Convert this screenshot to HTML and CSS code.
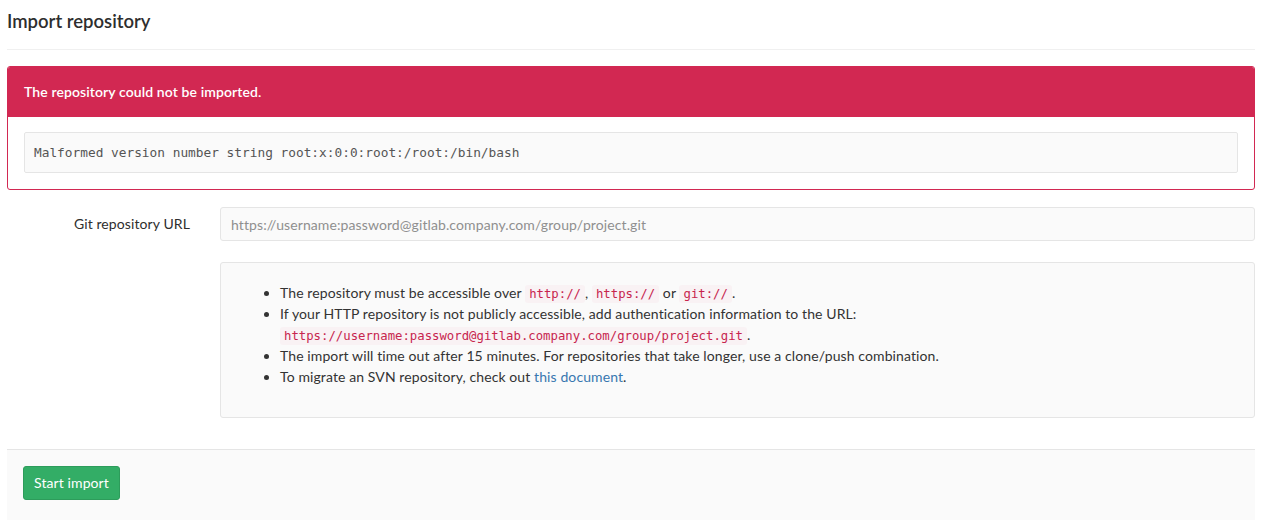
FILE: index.html
```html
<!DOCTYPE html>
<html>
<head>
<meta charset="utf-8">
<link rel="stylesheet" href="styles.css">
</head>
<body>
<div class="page">
  <h3 class="page-title">Import repository</h3>
  <hr class="divider">
  <div class="alert">
    <div class="alert-header">The repository could not be imported.</div>
    <div class="alert-body">
      <pre class="error-pre">Malformed version number string root:x:0:0:root:/root:/bin/bash</pre>
    </div>
  </div>
  <div class="form-group">
    <label class="form-label">Git repository URL</label>
    <input class="form-input" type="text" placeholder="https://username:password@gitlab.company.com/group/project.git">
  </div>
  <div class="form-group">
    <div class="form-label"></div>
    <div class="info-box">
      <ul class="info-list">
        <li>The repository must be accessible over <code>http://</code>, <code>https://</code> or <code>git://</code>.</li>
        <li>If your HTTP repository is not publicly accessible, add authentication information to the URL: <code>https://username:password@gitlab.company.com/group/project.git</code>.</li>
        <li>The import will time out after 15 minutes. For repositories that take longer, use a clone/push combination.</li>
        <li>To migrate an SVN repository, check out <a href="#">this document</a>.</li>
      </ul>
    </div>
  </div>
  <div class="form-actions">
    <button class="btn-success" type="button">Start import</button>
  </div>
</div>
</body>
</html>
```

FILE: styles.css
```css
html, body {
  margin: 0;
  padding: 0;
  background: #fff;
}
body {
  font-family: "Lato", "Liberation Sans", sans-serif;
  font-size: 14px;
  letter-spacing: 0.1px;
  color: #2e2e2e;
  line-height: 21px;
}
.page {
  width: 1248px;
  margin-left: 7px;
}
.page-title {
  margin: 0;
  padding-top: 10px;
  font-size: 18.5px;
  line-height: 22px;
  font-weight: 600;
  letter-spacing: 0;
  color: #2e2e2e;
}
.divider {
  margin: 17px 0 16px 0;
  border: 0;
  border-top: 1px solid #f0f0f0;
  height: 0;
}
.alert {
  border: 1px solid #d22852;
  border-radius: 3px;
  overflow: hidden;
}
.alert-header {
  background: #d22852;
  color: #fff;
  font-weight: 600;
  height: 50px;
  line-height: 49px;
  padding: 0 16px;
}
.alert-body {
  padding: 15px 16px 16px 16px;
}
.error-pre {
  margin: 0;
  background: #fafafa;
  border: 1px solid #e5e5e5;
  border-radius: 2px;
  padding: 10px 9px;
  font-family: "DejaVu Sans Mono", "Liberation Mono", monospace;
  font-size: 12.8px;
  line-height: 19px;
  letter-spacing: 0;
  color: #555;
}
.form-group {
  display: flex;
  margin-top: 17px;
}
.form-group + .form-group {
  margin-top: 21px;
}
.form-label {
  width: 183px;
  flex: none;
  margin-right: 30px;
  text-align: right;
  line-height: 34px;
  color: #2e2e2e;
}
.form-input {
  flex: 1;
  box-sizing: border-box;
  height: 34px;
  margin: 0;
  padding: 6px 10px;
  background: #fafafa;
  border: 1px solid #e5e5e5;
  border-radius: 3px;
  font-family: inherit;
  font-size: 14px;
  letter-spacing: 0.1px;
  color: #555;
}
.form-input::placeholder {
  color: #8f8f8f;
}
.info-box {
  flex: 1;
  background: #fafafa;
  border: 1px solid #e5e5e5;
  border-radius: 3px;
  padding: 19px;
  color: #333;
}
.info-list {
  margin: 0 0 11px 0;
  padding-left: 40px;
}
.info-list li {
  line-height: 21px;
}
.info-list code {
  font-family: "DejaVu Sans Mono", "Liberation Mono", monospace;
  font-size: 12.3px;
  line-height: 1;
  letter-spacing: 0;
  color: #c7254e;
  background: #f9f2f4;
  padding: 2px 4px;
  border-radius: 3px;
}
.info-list a {
  color: #3777b0;
  text-decoration: none;
}
.form-actions {
  margin-top: 31px;
  border-top: 1px solid #e5e5e5;
  background: #fafafa;
  padding: 16px 16px 20px 16px;
}
.btn-success {
  box-sizing: border-box;
  height: 34px;
  padding: 6px 10px;
  background: #33ad66;
  border: 1px solid #2d9c5b;
  border-radius: 3px;
  color: #fff;
  font-family: inherit;
  font-size: 14px;
  letter-spacing: 0.1px;
  line-height: 20px;
}
```
